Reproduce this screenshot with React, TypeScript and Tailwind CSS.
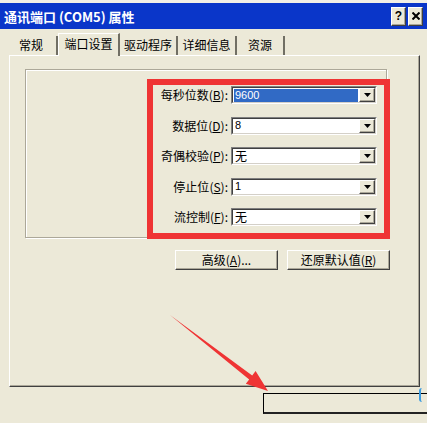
import React from "react";

const raised =
  "border border-t-white border-l-white border-r-[#404040] border-b-[#404040] shadow-[inset_-1px_-1px_0_#ACA899]";

function Combo({ value, selected }: { value: string; selected?: boolean }) {
  const isNum = /^[0-9]+$/.test(value);
  return (
    <div className="w-[146px] h-[18px] border border-t-[#808080] border-l-[#808080] border-r-white border-b-white">
      <div className="w-full h-full border border-t-[#404040] border-l-[#404040] border-r-[#D4D0C8] border-b-[#D4D0C8] bg-white flex items-center">
        <div className="flex-1 h-full flex items-center pl-px pr-px">
          <div
            className={
              "h-[13px] flex items-center pl-px " +
              (selected ? "bg-[#316AC5] text-white w-full" : "text-black")
            }
            style={{
              fontFamily: isNum
                ? '"Liberation Sans", Arial, sans-serif'
                : '"Noto Sans CJK SC", sans-serif',
              fontSize: isNum ? "11px" : "12px",
            }}
          >
            {value}
          </div>
        </div>
        <div className={"w-[16px] h-[14px] bg-[#ECE9D8] flex items-center justify-center " + raised}>
          <svg width="7" height="4" viewBox="0 0 7 4">
            <polygon points="0,0 7,0 3.5,4" fill="#000" />
          </svg>
        </div>
      </div>
    </div>
  );
}

function Row({ label, k, value, selected }: { label: string; k: string; value: string; selected?: boolean }) {
  return (
    <div className="flex items-center h-[18px]">
      <div className="w-[202px] text-right text-[12px] leading-none whitespace-nowrap text-black">
        {label}(<span className="underline">{k}</span>):
      </div>
      <div className="ml-[3px]">
        <Combo value={value} selected={selected} />
      </div>
    </div>
  );
}

function Tab({ label, active, w }: { label: string; active?: boolean; w: number }) {
  if (active) {
    return (
      <div
        className="relative z-10 h-[23px] -mb-px bg-[#ECE9D8] border-l border-t border-white border-r-2 border-r-[#716F64] flex items-start justify-center pt-[4px] text-[12px] leading-none"
        style={{ width: w }}
      >
        {label}
      </div>
    );
  }
  return (
    <div
      className="h-[19px] bg-[#ECE9D8] border-r-2 border-r-[#716F64] flex items-start justify-center pt-[3px] text-[12px] leading-none"
      style={{ width: w }}
    >
      {label}
    </div>
  );
}

function Btn({ children }: { children: React.ReactNode }) {
  return (
    <div className={"w-[103px] h-[20px] bg-[#ECE9D8] flex items-center justify-center text-[12px] leading-none " + raised}>
      {children}
    </div>
  );
}

export default function App() {
  return (
    <div
      className="w-[427px] h-[423px] bg-[#ECE9D8] relative overflow-hidden flex flex-col text-black"
      style={{ fontFamily: '"Noto Sans CJK SC", "Liberation Sans", sans-serif' }}
    >
      <div className="h-[3px] bg-[#F2F0E6]" />
      <div className="h-[26px] bg-[#0A36C9] flex items-center pl-[4px] pr-[4px]">
        <div className="flex-1 text-white font-bold text-[13px] leading-none whitespace-pre">
          通讯端口 (COM5) 属性
        </div>
        <div className="flex gap-[2px]">
          <div className={"w-[15px] h-[19px] bg-[#ECE9D8] flex items-center justify-center text-[12px] font-bold leading-none " + raised}
            style={{ fontFamily: '"Liberation Sans", Arial, sans-serif' }}>
            ?
          </div>
          <div className={"w-[15px] h-[19px] bg-[#ECE9D8] flex items-center justify-center " + raised}>
            <svg width="8" height="8" viewBox="0 0 8 8">
              <path d="M0.5 0.5 L7.5 7.5 M7.5 0.5 L0.5 7.5" stroke="#000" strokeWidth="2" />
            </svg>
          </div>
        </div>
      </div>
      <div className="h-[4px]" />
      <div className="h-[22px] pl-[6px] flex items-end">
        <Tab label="常规" w={52} />
        <Tab label="端口设置" active w={62} />
        <Tab label="驱动程序" w={58} />
        <Tab label="详细信息" w={59} />
        <Tab label="资源" w={48} />
      </div>
      <div className="ml-[9px] w-[411px] h-[332px] border border-t-white border-l-white border-r-[#404040] border-b-[#404040] shadow-[inset_-1px_-1px_0_#ACA899] flex flex-col">
        <div className="ml-[15px] mt-[13px] w-[362px] h-[169px] border border-[#ACA899] shadow-[inset_1px_1px_0_white,1px_1px_0_white] flex flex-col pt-[16px] gap-[12.5px]">
          <Row label="每秒位数" k="B" value="9600" selected />
          <Row label="数据位" k="D" value="8" />
          <Row label="奇偶校验" k="P" value="无" />
          <Row label="停止位" k="S" value="1" />
          <Row label="流控制" k="F" value="无" />
        </div>
        <div className="mt-[12px] pl-[165px] flex gap-[9px]">
          <Btn>
            高级(<span className="underline">A</span>)...
          </Btn>
          <Btn>
            还原默认值(<span className="underline">R</span>)
          </Btn>
        </div>
      </div>
      <div className="mt-[6px] ml-[263px] w-[164px] h-[21px] border-t border-l border-black border-b-2 border-b-[#222]" />

      <div className="absolute left-[147px] top-[79px] w-[243px] h-[160px] border-[6px] border-[#EF3434]" />
      <div className="absolute left-[419px] top-[388px] w-[3px] h-[14px] border-l-2 border-[#3A9BE0] rounded-l-full" />
      <svg className="absolute left-0 top-0" width="427" height="423" viewBox="0 0 427 423">
        <polygon
          points="170,315 252.2,375.4 255.6,371.1 268,391 245.8,383.7 249.2,379.4"
          fill="#EF3434"
        />
      </svg>
    </div>
  );
}
